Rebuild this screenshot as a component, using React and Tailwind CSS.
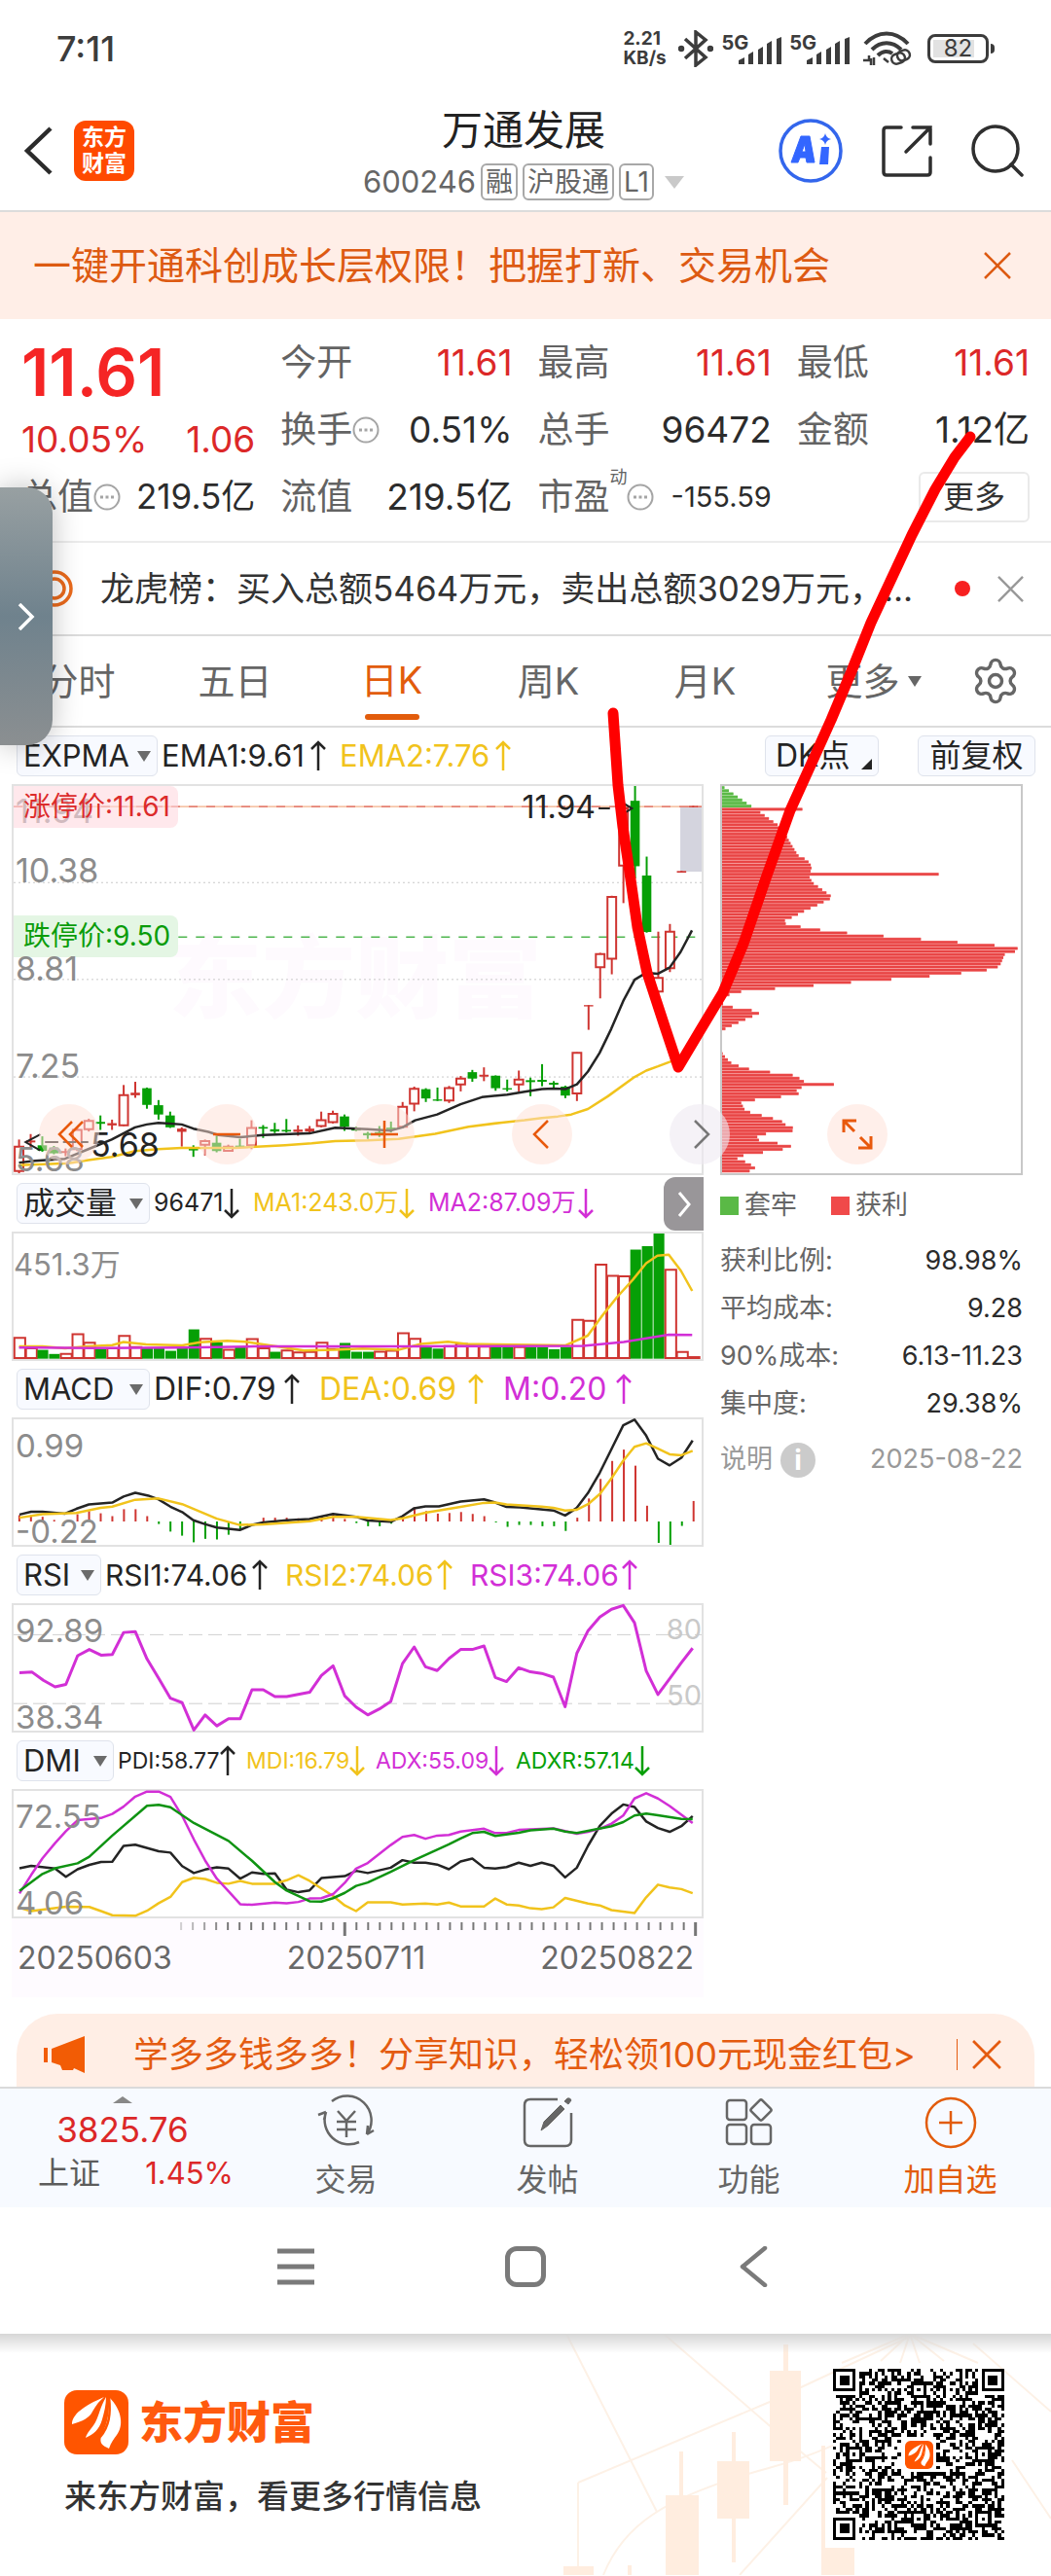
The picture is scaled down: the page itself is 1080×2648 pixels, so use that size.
import { Settings } from 'lucide-react';

const RED = '#cf3531';
const GREEN = '#069f06';
const BLACK = '#242424';
const YELLOW = '#f1c31c';
const PURPLE = '#d22fd6';

// [open/close top, open/close bottom, high, low, up?]
const candles = [
  [1320, 1400, 1300, 1405, 1], [1303, 1309, 1283, 1330, 1], [1318, 1335, 1290, 1338, 0], [1325, 1343, 1320, 1346, 0],
  [1336, 1342, 1328, 1352, 1], [1268, 1332, 1262, 1336, 1], [1240, 1270, 1235, 1275, 1], [1245, 1251, 1225, 1270, 0],
  [1249, 1256, 1238, 1270, 1], [1160, 1258, 1130, 1258, 1], [1154, 1162, 1120, 1170, 1], [1140, 1192, 1138, 1204, 0],
  [1193, 1222, 1177, 1238, 0], [1225, 1262, 1213, 1264, 0], [1266, 1276, 1262, 1322, 1], [1328, 1334, 1318, 1354, 0],
  [1303, 1318, 1300, 1350, 1], [1310, 1336, 1288, 1340, 0], [1320, 1337, 1316, 1338, 1], [1319, 1323, 1298, 1324, 0],
  [1262, 1320, 1240, 1330, 1], [1261, 1266, 1255, 1295, 0], [1268, 1275, 1248, 1280, 0], [1270, 1275, 1236, 1278, 0],
  [1269, 1276, 1256, 1288, 1], [1266, 1275, 1258, 1280, 1], [1238, 1260, 1213, 1262, 1], [1218, 1248, 1210, 1250, 1],
  [1228, 1260, 1222, 1273, 0], [1264, 1272, 1260, 1274, 0], [1280, 1287, 1276, 1298, 0], [1277, 1283, 1258, 1292, 0],
  [1263, 1268, 1244, 1278, 0], [1196, 1262, 1183, 1264, 1], [1140, 1190, 1135, 1212, 1], [1143, 1172, 1140, 1183, 0],
  [1175, 1179, 1138, 1180, 0], [1138, 1180, 1133, 1186, 1], [1108, 1130, 1102, 1150, 1], [1090, 1110, 1083, 1120, 0],
  [1098, 1104, 1075, 1118, 1], [1101, 1140, 1100, 1148, 0], [1140, 1144, 1113, 1150, 0], [1111, 1130, 1085, 1150, 1],
  [1115, 1121, 1107, 1165, 0], [1114, 1120, 1065, 1134, 0], [1123, 1129, 1118, 1142, 0], [1135, 1163, 1132, 1171, 0],
  [1028, 1158, 1028, 1180, 1], [881, 885, 881, 958, 1], [720, 765, 718, 860, 1], [542, 738, 540, 785, 1],
  [265, 448, 262, 563, 1], [244, 448, 198, 486, 0], [477, 653, 418, 655, 0], [794, 841, 652, 842, 1],
  [650, 768, 628, 778, 1], [463, 468, 463, 468, 1], [260, 264, 260, 264, 1],
];

const ema1 = '52,1372 100,1366 190,1360 260,1330 330,1300 400,1262 435,1253 470,1248 505,1250 540,1253 575,1266 620,1276 650,1286 715,1293 784,1286 923,1281 1000,1263 1098,1268 1167,1272 1202,1262 1240,1240 1306,1222 1376,1190 1440,1168 1516,1160 1568,1151 1620,1143 1655,1141 1690,1143 1725,1128 1758,1088 1793,1030 1828,955 1864,868 1898,802 1933,780 1968,783 2003,764 2036,715 2070,648';
const ema2 = '52,1380 200,1374 260,1364 330,1354 400,1336 470,1330 540,1326 700,1326 850,1318 930,1312 1000,1305 1098,1303 1190,1298 1300,1282 1400,1260 1500,1247 1568,1240 1620,1233 1668,1228 1708,1222 1758,1205 1818,1165 1898,1105 1933,1085 1968,1072 2003,1058 2030,1048';

// positive = rising day, negative = falling day
const volumes = [
  527, 560, -567, -580, 578, 515, 542, -565, 560, 521, 556, -560, -562, -570, -560, -502, 530, -543, 565, -558,
  531, 560, -573, 567, 573, 572, 542, 562, -545, -573, -573, 571, 568, 512, 530, -556, -563, 553, 546, 549,
  555, -547, -557, 556, -558, -558, -565, -558, 470, 473, 295, 330, 332, -249, -238, -198, 311, 572, 588,
];
const volMa1 = '38,556 90,556 140,562 190,556 245,552 270,542 320,550 400,553 440,543 500,538 540,541 580,550 620,558 670,569 740,567 800,563 880,567 930,548 990,541 1030,548 1100,550 1250,553 1300,522 1330,463 1365,400 1400,345 1430,292 1455,268 1480,265 1507,316 1532,380';
const volMa2 = '38,560 80,560 200,561 400,560 560,556 900,556 1290,554 1380,542 1440,528 1480,519 1532,520';

const macdBars = [
  1075, 1075, 1080, 1090, 1095, 1072, 1062, 1069, 1078, 1056, 1056, 1078, 1103, 1127, 1140, 1161, 1150, 1152, 1137, 1120,
  1095, 1083, 1083, 1083, 1085, 1085, 1078, 1072, 1087, 1100, 1110, 1110, 1102, 1078, 1050, 1062, 1070, 1068, 1065, 1071,
  1078, 1098, 1112, 1106, 1106, 1110, 1110, 1125, 1083, 1022, 960, 903, 867, 918, 1045, 1163, 1169, 1109, 1030,
];
const dif = '39,1073 65,1064 90,1064 140,1070 165,1055 193,1041 245,1035 270,1016 296,1004 325,1013 348,1025 374,1048 400,1065 425,1091 450,1103 477,1114 528,1122 555,1106 580,1098 632,1091 683,1087 735,1071 786,1080 812,1092 863,1096 889,1078 915,1053 940,1047 970,1047 1018,1032 1070,1025 1095,1035 1120,1049 1150,1050 1224,1060 1250,1076 1275,1053 1301,1004 1327,940 1353,865 1379,790 1404,772 1430,823 1456,896 1482,917 1508,893 1533,838';
const dea = '39,1083 90,1072 165,1068 219,1052 245,1048 296,1026 348,1022 400,1040 450,1070 477,1086 528,1106 580,1104 683,1094 735,1080 786,1080 863,1090 889,1085 940,1067 1018,1049 1070,1036 1095,1035 1120,1041 1198,1048 1224,1052 1250,1060 1275,1058 1301,1040 1327,1008 1353,958 1379,902 1404,858 1430,847 1456,864 1482,882 1508,885 1533,871';

const rsi = '39,389 67,387 92,413 118,434 142,426 168,335 194,315 220,333 245,331 270,261 296,258 322,345 348,407 374,470 400,484 426,571 451,523 477,558 503,535 529,535 555,443 580,443 606,465 632,465 683,451 709,398 735,367 761,463 786,498 812,523 838,504 863,480 889,360 915,307 940,370 966,382 992,344 1018,315 1044,315 1070,304 1095,404 1120,417 1147,373 1173,386 1198,391 1224,403 1250,497 1276,327 1301,255 1327,212 1353,187 1379,175 1404,230 1430,383 1456,458 1482,408 1508,357 1533,311';

const pdi = '39,992 65,984 118,993 142,1019 168,995 194,981 220,972 245,971 270,921 296,917 348,938 374,942 400,985 426,1007 451,996 477,989 503,993 529,1025 555,1005 580,1010 606,1008 632,1060 658,1068 683,1062 709,1023 761,1017 786,1000 812,1007 863,990 889,966 915,974 940,974 966,980 992,995 1018,970 1044,961 1070,990 1095,993 1120,988 1147,974 1173,984 1198,974 1224,984 1250,1021 1276,990 1301,920 1327,857 1353,818 1379,789 1404,797 1430,843 1456,864 1482,876 1508,858 1533,826';
const mdi = '39,1117 65,1128 142,1114 194,1115 220,1128 245,1141 296,1143 322,1127 348,1103 374,1083 400,1036 426,1022 451,1026 477,1038 503,1041 529,1032 555,1041 606,1041 632,1030 658,1014 683,1032 735,1080 761,1110 786,1128 812,1100 863,1100 889,1107 940,1104 966,1107 992,1101 1018,1113 1070,1113 1095,1088 1120,1107 1147,1110 1173,1119 1198,1122 1224,1116 1250,1086 1301,1104 1327,1110 1353,1125 1404,1134 1430,1084 1456,1044 1482,1053 1508,1058 1533,1071';
const adx = '39,1072 65,1013 90,960 118,912 142,874 168,839 220,832 245,819 270,796 296,764 322,748 348,748 374,765 400,825 426,900 451,967 477,1025 503,1065 529,1106 555,1108 606,1101 632,1103 658,1099 683,1088 709,1087 735,1074 761,1038 786,993 812,975 863,918 889,892 915,886 940,898 966,888 992,886 1018,875 1070,866 1095,880 1120,880 1147,870 1224,865 1276,882 1301,876 1327,866 1353,850 1379,824 1404,770 1430,753 1456,770 1482,794 1533,848';
const adxr = '39,1064 90,1010 118,992 168,976 194,955 245,888 322,793 348,790 374,798 426,848 503,905 555,968 606,1036 632,1063 683,1097 709,1098 735,1087 761,1070 786,1048 812,1037 863,1003 915,966 966,933 992,916 1018,897 1044,880 1070,876 1095,889 1147,879 1173,871 1224,866 1250,875 1276,880 1301,873 1353,858 1379,845 1404,824 1430,818 1456,823 1508,835 1533,836';

// outline of the cost distribution: [y, x]
const profile = [
  [204, 590], [258, 665], [267, 680], [275, 690], [323, 755], [330, 765], [370, 785], [415, 812], [430, 840], [450, 854],
  [480, 845], [500, 856], [546, 917], [568, 874], [585, 838], [605, 800], [624, 760], [634, 800], [644, 858], [653, 920],
  [663, 1030], [672, 1140], [682, 1250], [691, 1360], [701, 1468], [711, 1484], [720, 1437], [760, 1420], [770, 1397],
  [779, 1330], [789, 1237], [799, 1120], [808, 1003], [818, 886], [828, 768], [837, 650], [847, 612], [856, 583],
  [876, 583], [885, 596], [894, 658], [904, 700], [914, 680], [934, 636], [953, 596], [962, 583], [1030, 583],
  [1040, 590], [1060, 608], [1078, 650], [1088, 710], [1097, 790], [1107, 812], [1117, 830], [1136, 827], [1146, 805],
  [1156, 820], [1165, 778], [1175, 690], [1185, 640], [1205, 650], [1213, 660], [1232, 728], [1242, 762], [1252, 770],
  [1262, 795], [1272, 804], [1281, 720], [1291, 690], [1300, 683], [1310, 743], [1320, 793], [1330, 770], [1339, 715],
  [1349, 650], [1358, 625], [1368, 650], [1387, 685], [1396, 668], [1410, 655],
];
const spikes = { 267: 825, 469: 1236, 1127: 920 };

const costBars = Array.from({ length: 125 }, (_, i) => {
  const y = 204 + i * 9.63;
  const k = Math.max(1, profile.findIndex(([py]) => py >= y));
  const [y0, x0] = profile[k - 1];
  const [y1, x1] = profile[k];
  const spike = Object.keys(spikes).find((s) => Math.abs(s - y) < 4.8);
  return { y, x: spike ? spikes[spike] : x0 + ((x1 - x0) * (y - y0)) / (y1 - y0) };
});

const Line = ({ points, color, width = 2.5 }) => (
  <polyline points={points} fill="none" stroke={color} strokeWidth={width} strokeLinejoin="round" vectorEffect="non-scaling-stroke" />
);

const Plot = ({ viewBox, height = 'h-[133px]', border = 'border-[#e2e2e2]', children, overlay }) => (
  <div className={`relative border-2 ${border} ${height}`}>
    <svg viewBox={viewBox} preserveAspectRatio="none" className="block h-full w-full overflow-visible">
      {children}
    </svg>
    {overlay}
  </div>
);

const Arrow = ({ down }) => (
  <svg viewBox="0 0 16 32" className={`h-8 w-4 shrink-0 ${down ? 'rotate-180' : ''}`} fill="none" stroke="currentColor" strokeWidth="2.500">
    <path d="M8 31V2M1 9l7-7 7 7" />
  </svg>
);

const IndicatorRow = ({ name, pill, gap, size, items }) => (
  <div className="flex h-[58px] items-center pl-[5px]">
    <button className={`flex h-[42px] shrink-0 items-center justify-between rounded-md border border-[#dfe3ec] bg-[#f8faff] px-1.5 text-[#242424] ${pill}`}>
      <span>{name}</span>
      <span className="h-0 w-0 border-x-[7px] border-t-[11px] border-x-transparent border-t-[#6b6b6b]" />
    </button>
    <div className={`flex items-center pl-1 whitespace-nowrap ${gap} ${size}`}>
      {items.map(({ text, color, down, width }) => (
        <span key={text} className={`flex items-center justify-between ${color} ${width}`}>
          {text}
          <Arrow down={down} />
        </span>
      ))}
    </div>
  </div>
);

const Dots = () => (
  <svg viewBox="0 0 28 28" className="h-7 w-7 shrink-0" fill="none" stroke="#a5a5a5" strokeWidth="2">
    <circle cx="14" cy="14" r="12.500" />
    <path d="M7 14h3M12.500 14h3M18 14h3" strokeWidth="3" />
  </svg>
);

const Cross = ({ className }) => (
  <svg viewBox="0 0 28 28" className={className} fill="none" stroke="currentColor" strokeWidth="2.500">
    <path d="M1 1l26 26M27 1L1 27" />
  </svg>
);

const Cell = ({ label, value, icon, red, sup, valueSize = 'text-[37px]' }) => (
  <div className="flex h-[69px] items-center justify-between whitespace-nowrap">
    <dt className="flex items-center text-[37px] text-[#636363]">
      {label}
      {sup && <span className="self-start text-[18px] leading-4">{sup}</span>}
      {icon && <Dots />}
    </dt>
    <dd className={`${valueSize} ${red ? 'text-[#dc2828]' : 'text-[#2c2c2c]'}`}>{value}</dd>
  </div>
);

const Signal = () => (
  <div className="flex">
    <span className="text-[20px] leading-5 font-bold">5G</span>
    <svg viewBox="0 0 44 28" className="mt-1 -ml-2.5 h-7 w-11" fill="#3c3c3c">
      <path d="M0 28v-4l6-3v7zM10 28V18l5-3v13zM20 28V13l5-3v18zM29 28V7l5-3v24zM39 28V2l5-2v28z" />
    </svg>
  </div>
);

const StatusBar = () => (
  <header className="flex h-[100px] items-center justify-between pr-[58px] pl-[58px] text-[#3c3c3c]">
    <span className="text-[36px] font-medium">7:11</span>
    <div className="flex items-center">
      <div className="flex w-[53px] flex-col text-[19px] leading-5 font-bold">
        <span>2.21</span>
        <span>KB/s</span>
      </div>
      <svg viewBox="0 0 36 38" className="mr-2 ml-1 h-[38px] w-9" fill="none" stroke="#3c3c3c" strokeWidth="3.500">
        <path d="M7 9l21 19-10 8V2l10 8L7 29" />
        <circle cx="3" cy="19" r="1.500" />
        <circle cx="33" cy="19" r="1.500" />
      </svg>
      <Signal />
      <div className="w-2" />
      <Signal />
      <svg viewBox="0 0 50 36" className="mr-4 ml-3.5 h-9 w-[50px]" fill="none" stroke="#3c3c3c" strokeWidth="4">
        <path d="M2 13c13-14 31-14 44 0" />
        <path d="M9 19c9-9 21-9 30 0" />
        <path d="M15 25c5-5 11-5 15-2" />
        <path d="M0 30h6v-5M11 27v8M8 28v7M21 28l5 4" strokeWidth="2.500" />
        <rect x="29" y="23" width="14" height="10" rx="5" strokeWidth="2.500" transform="rotate(-20 36 28)" />
        <rect x="35" y="20" width="13" height="10" rx="5" strokeWidth="2.500" transform="rotate(-20 41 25)" />
      </svg>
      <div className="flex h-[30px] w-[63px] items-center justify-center rounded-lg border-3 border-[#3c3c3c] p-[3px] text-[24px] leading-none">
        <span className="flex h-full w-full items-center justify-center bg-linear-to-r from-[#e2e2e2] from-82% to-transparent to-82%">82</span>
      </div>
      <span className="ml-0.5 h-2.5 w-1 rounded-r bg-[#3c3c3c]" />
    </div>
  </header>
);

const TitleBar = () => (
  <div className="grid h-[118px] grid-cols-[1fr_auto_1fr] items-center border-b-2 border-[#dcdcdc] pr-7 pl-6">
    <div className="mb-1.5 flex items-center gap-[22px]">
      <button aria-label="返回">
        <svg viewBox="0 0 30 50" className="h-[50px] w-[30px]" fill="none" stroke="#2b2b2b" strokeWidth="4.500">
          <path d="M28 2L4 25l24 23" />
        </svg>
      </button>
      <div className="flex h-[62px] w-[62px] items-center justify-center rounded-xl bg-[#ff4a00] text-center text-[23px] leading-[27px] font-bold text-white">
        东方
        <br />
        财富
      </div>
    </div>
    <div className="flex flex-col items-center">
      <h1 className="text-[42px] leading-[58px] text-[#222]">万通发展</h1>
      <div className="flex h-[48px] items-center gap-[5px] text-[#666]">
        <span className="text-[31px]">600246</span>
        {['融', '沪股通', 'L1'].map((tag) => (
          <span key={tag} className="rounded-md border-2 border-[#a8a8a8] px-[3px] text-[28px] leading-[34px]">
            {tag}
          </span>
        ))}
        <span className="ml-1.5 h-0 w-0 border-x-[10px] border-t-[13px] border-x-transparent border-t-[#c9c9c9]" />
      </div>
    </div>
    <div className="mb-1.5 flex items-center justify-end gap-[39px]">
      <button aria-label="Ai">
        <svg viewBox="0 0 66 66" className="h-[66px] w-[66px]" fill="none" stroke="#3366ec">
          <circle cx="33" cy="33" r="31" strokeWidth="3.500" />
          <path d="M13 45L23 18h9l5 27h-8l-1-5h-6l-2 5zM24 34h4l-1-8z" fill="#3366ff" fillRule="evenodd" stroke="#3366ff" strokeLinejoin="round" />
          <path d="M44 29h8l-1 18h-9z" fill="#3366ff" stroke="none" />
          <path d="M48 15q1 5 6 6-5 1-6 6-1-5-6-6 5-1 6-6z" fill="#3366ff" stroke="none" />
        </svg>
      </button>
      <button aria-label="分享">
        <svg viewBox="0 0 54 54" className="h-[54px] w-[54px]" fill="none" stroke="#2f2f2f" strokeWidth="3.500" strokeLinecap="round">
          <path d="M21 3H6q-3 0-3 3v43q0 3 3 3h42q3 0 3-3V34M33 3h18v17M51 3L26 28" />
        </svg>
      </button>
      <button aria-label="搜索">
        <svg viewBox="0 0 54 54" className="h-[54px] w-[54px]" fill="none" stroke="#2f2f2f" strokeWidth="3.500" strokeLinecap="round">
          <circle cx="25" cy="25" r="23" />
          <path d="M41 41l11 11" />
        </svg>
      </button>
    </div>
  </div>
);

const Quotes = () => (
  <section className="border-b-2 border-[#ececec] pt-[10px] pr-[22px] pb-[11px] pl-[22px]">
    <dl className="grid grid-cols-[240fr_238fr_240fr_239fr] gap-x-[26px]">
      <div className="row-span-2 flex flex-col text-[#dc2828]">
        <dd className="text-[67px] leading-[90px] font-semibold text-[#f52525]">11.61</dd>
        <dd className="flex justify-between text-[37px] leading-[48px]">
          <span>10.05%</span>
          <span>1.06</span>
        </dd>
      </div>
      <Cell label="今开" value="11.61" red />
      <Cell label="最高" value="11.61" red />
      <Cell label="最低" value="11.61" red />
      <Cell label="换手" value="0.51%" icon />
      <Cell label="总手" value="96472" />
      <Cell label="金额" value="1.12亿" />
      <Cell label="总值" value="219.5亿" icon valueSize="text-[35px]" />
      <Cell label="流值" value="219.5亿" />
      <Cell label="市盈" sup="动" value="-155.59" icon valueSize="text-[29px]" />
      <div className="flex h-[69px] items-center justify-end">
        <button className="h-[52px] w-[114px] rounded-md border-2 border-[#eaeaea] text-[32px] leading-none text-[#333]">更多</button>
      </div>
    </dl>
  </section>
);

const News = () => (
  <div className="flex h-[96px] items-center border-b-2 border-[#dcdcdc] pr-7 pl-[37px]">
    <svg viewBox="0 0 38 38" className="h-[38px] w-[38px] shrink-0" fill="none" stroke="#ea6a1c" strokeWidth="3.500">
      <circle cx="19" cy="19" r="17" />
      <circle cx="19" cy="19" r="10" />
    </svg>
    <p className="ml-[28px] flex-1 overflow-hidden text-[35px] whitespace-nowrap text-[#333]">
      龙虎榜：买入总额5464万元，卖出总额3029万元，...
    </p>
    <span className="h-4 w-4 shrink-0 rounded-full bg-[#f72020]" />
    <button aria-label="关闭" className="ml-7 text-[#999]"><Cross className="h-[27px] w-[27px]" /></button>
  </div>
);

const Tabs = () => (
  <nav className="grid h-[94px] grid-cols-[161fr_161fr_161fr_161fr_161fr_185fr_90fr] items-center border-b-2 border-[#dcdcdc] text-[38px] text-[#666]">
    {['分时', '五日', '日K', '周K', '月K'].map((tab) => (
      <button
        key={tab}
        className={tab === '日K' ? 'flex h-full flex-col items-center pt-[17px] text-[#e25c0c]' : ''}
      >
        {tab}
        {tab === '日K' && <span className="mt-1.5 h-1.5 w-14 shrink-0 rounded bg-[#e25c0c]" />}
      </button>
    ))}
    <button className="flex items-center justify-center gap-2">
      更多
      <span className="h-0 w-0 border-x-[7px] border-t-[11px] border-x-transparent border-t-[#666]" />
    </button>
    <button aria-label="设置" className="pl-[7px]"><Settings className="h-[52px] w-[52px]" strokeWidth={1.6} /></button>
  </nav>
);

const KLine = () => (
  <Plot
    viewBox="36 198 2063 1207"
    height="h-[402px]"
    overlay={
      <div className="text-[34px] leading-10 text-[#8c8c8c]">
        <span className="absolute top-[6px] left-0.5">11.94</span>
        <span className="absolute top-0 left-0 w-[169px] rounded-r-lg bg-[#ffd9e0]/60 pl-2.5 text-[28px] leading-[43px] text-[#dc2b2b]">涨停价:11.61</span>
        <span className="absolute top-[67px] left-0.5">10.38</span>
        <span className="absolute top-[133px] left-0 w-[169px] rounded-r-lg bg-[#e4f6e4] pl-2.5 text-[28px] leading-[43px] text-[#0a9c0a]">跌停价:9.50</span>
        <span className="absolute top-[168px] left-0.5">8.81</span>
        <span className="absolute top-[268px] left-0.5">7.25</span>
        <span className="absolute top-[364px] left-0.5">5.68</span>
        <span className="absolute top-[349px] left-[79px] text-[#242424]">5.68</span>
        <span className="absolute top-[2px] right-[109px] text-[32px] text-[#242424]">11.94</span>
      </div>
    }
  >
    <text x="500" y="900" fontSize="280" fontWeight="900" fill="#fefafe">东方财富</text>
    {[499, 801, 1105].map((y) => (
      <path key={y} d={`M36 ${y}H2099`} stroke="#c9c9c9" strokeDasharray="2 3" strokeWidth="1" vectorEffect="non-scaling-stroke" />
    ))}
    <rect x="2035" y="265" width="64" height="200" fill="#d4d4de" />
    <path d="M36 262H2099" stroke="#ef9a68" strokeWidth="1" vectorEffect="non-scaling-stroke" />
    <path d="M36 262H2099" stroke="#d9534f" strokeWidth="1" strokeDasharray="9 9" vectorEffect="non-scaling-stroke" />
    <path d="M530 669H2099" stroke="#4fb64f" strokeWidth="1.500" strokeDasharray="9 9" vectorEffect="non-scaling-stroke" />
    {candles.map(([top, bottom, high, low, up], i) => {
      const x = 52.3 + 34.85 * i;
      const color = up ? RED : GREEN;
      const solid = !up || bottom - top < 12;
      return (
        <g key={i} stroke={color} fill={solid ? color : 'white'}>
          <path d={`M${x} ${high}V${low}`} strokeWidth="2" vectorEffect="non-scaling-stroke" />
          {solid ? (
            <rect x={x - 14} y={top} width="28" height={bottom - top} stroke="none" />
          ) : (
            <rect x={x - 13} y={top + 2} width="26" height={bottom - top - 4} strokeWidth="2" vectorEffect="non-scaling-stroke" />
          )}
        </g>
      );
    })}
    <Line points={ema2} color={YELLOW} />
    <Line points={ema1} color={BLACK} />
    <path d="M116 1284L72 1308l44 26M130 1308h40M184 1308h40M238 1308h22" fill="none" stroke={BLACK} strokeWidth="2" vectorEffect="non-scaling-stroke" />
    <path d="M1790 268h34M1868 254l22 14-22 14M1842 268h30" fill="none" stroke={BLACK} strokeWidth="2" vectorEffect="non-scaling-stroke" />
  </Plot>
);

const CostChart = () => (
  <Plot viewBox="583 199 901 1206" height="h-[402px]" border="border-[#c8c8c8]">
    {costBars.map(({ y, x }) => (
      <g key={y}>
        <rect x="583" y={y - 4.8} width={x - 583} height="9.700" fill={y < 262 ? '#8ad078' : '#f58080'} />
        <rect x="583" y={y - 3.4} width={x - 583} height="6.800" fill={y < 262 ? '#5ab946' : '#e84444'} />
      </g>
    ))}
  </Plot>
);

const toolIcons = [
  { name: '快退', path: 'M18 2L5 15l13 13M29 2L16 15l13 13' },
  { name: '缩小', path: 'M1 15h28' },
  { name: '放大', path: 'M1 15h28M15 1v28' },
  { name: '左移', path: 'M21 1L7 15l14 14' },
  { name: '右移', path: 'M10 1l14 14-14 14', gray: true },
];

const ChartTools = () => (
  <div className="absolute right-[139px] bottom-[11px] left-7 flex justify-between">
    {toolIcons.map(({ name, path, gray }) => (
      <button
        key={name}
        aria-label={name}
        className={`flex h-[62px] w-[62px] items-center justify-center rounded-full ${gray ? 'bg-[#efeaf2]/60 text-[#777]' : 'bg-[#ffdfd5]/50 text-[#e8590c]'}`}
      >
        <svg viewBox="0 0 30 30" className="h-[30px] w-[30px]" fill="none" stroke="currentColor" strokeWidth="2.500">
          <path d={path} />
        </svg>
      </button>
    ))}
    <button aria-label="全屏" className="flex h-[62px] w-[62px] items-center justify-center rounded-full bg-[#ffdfd5]/50 text-[#e8590c]">
      <svg viewBox="0 0 32 32" className="h-8 w-8" fill="none" stroke="currentColor" strokeWidth="3">
        <path d="M2 14V2h13M2 2l11 11M30 18v12H17M30 30L19 19" />
      </svg>
    </button>
  </div>
);

const stats = [
  ['获利比例:', '98.98%'],
  ['平均成本:', '9.28'],
  ['90%成本:', '6.13-11.23'],
  ['集中度:', '29.38%'],
];

const CostInfo = () => (
  <aside className="text-[27px] text-[#666]">
    <div className="flex h-[62px] items-center">
      <span className="h-[19px] w-[19px] bg-[#5ab946]" />
      <span className="ml-1.5">套牢</span>
      <span className="ml-[35px] h-[19px] w-[19px] bg-[#f04a4a]" />
      <span className="ml-1.5">获利</span>
    </div>
    <dl className="pt-[2px]">
      {stats.map(([label, value]) => (
        <div key={label} className="flex h-[49px] items-center justify-between">
          <dt>{label}</dt>
          <dd className="text-[#2b2b2b]">{value}</dd>
        </div>
      ))}
    </dl>
    <div className="mt-2 flex h-[49px] items-center text-[#999]">
      说明
      <span className="ml-2 flex h-9 w-9 items-center justify-center rounded-full bg-[#cbcbcb] text-[28px] font-bold text-white">i</span>
      <span className="ml-auto">2025-08-22</span>
    </div>
  </aside>
);

const Indicators = () => (
  <div>
    <div className="relative">
      <IndicatorRow
        name="成交量"
        pill="w-[137px] text-[32px] leading-none"
        gap="gap-[14px]"
        size="text-[25px]"
        items={[
          { text: '96471', color: 'text-[#242424]', down: true, width: 'w-[88px]' },
          { text: 'MA1:243.0万', color: 'text-[#f1c31c]', down: true, width: 'w-[166px]' },
          { text: 'MA2:87.09万', color: 'text-[#d22fd6]', down: true, width: 'w-[170px]' },
        ]}
      />
      <button aria-label="收起" className="absolute top-0.5 right-0 flex h-[55px] w-[41px] items-center justify-center rounded-l-xl bg-[#999699]">
        <svg viewBox="0 0 14 26" className="h-[26px] w-3.5" fill="none" stroke="white" strokeWidth="3">
          <path d="M2 1l10 12L2 25" />
        </svg>
      </button>
    </div>
    <Plot viewBox="26 198 1527 398" overlay={<span className="absolute top-[9px] left-0 text-[31px] text-[#8c8c8c]">451.3万</span>}>
      {volumes.map((v, i) => {
        const x = 38.7 + 25.8 * i;
        const top = Math.abs(v);
        return v < 0 ? (
          <rect key={i} x={x - 11.5} y={top} width="24" height={595 - top} fill={GREEN} />
        ) : (
          <rect key={i} x={x - 11} y={top + 2} width="24" height={Math.max(593 - top - 2, 2)} fill="white" stroke={RED} strokeWidth="2" vectorEffect="non-scaling-stroke" />
        );
      })}
      <Line points={volMa1} color={YELLOW} />
      <Line points={volMa2} color={PURPLE} />
    </Plot>
    <IndicatorRow
      name="MACD"
      pill="w-[137px] text-[31px]"
      gap="gap-5"
      size="text-[32px]"
      items={[
        { text: 'DIF:0.79', color: 'text-[#242424]', width: 'w-[150px]' },
        { text: 'DEA:0.69', color: 'text-[#f1c31c]', width: 'w-[169px]' },
        { text: 'M:0.20', color: 'text-[#d22fd6]', width: 'w-[132px]' },
      ]}
    />
    <Plot
      viewBox="26 771 1527 398"
      overlay={
        <div className="text-[33px] leading-9 text-[#8c8c8c]">
          <span className="absolute top-[9px] left-0.5">0.99</span>
          <span className="absolute top-[97px] left-0.5">-0.22</span>
        </div>
      }
    >
      {macdBars.map((y, i) => (
        <path key={i} d={`M${38.7 + 25.8 * i} 1095V${y}`} stroke={y > 1095 ? GREEN : RED} strokeWidth="2" vectorEffect="non-scaling-stroke" />
      ))}
      <Line points={dif} color={BLACK} />
      <Line points={dea} color={YELLOW} />
    </Plot>
    <IndicatorRow
      name="RSI"
      pill="w-[87px] text-[31px]"
      gap="gap-[18px]"
      size="text-[30px]"
      items={[
        { text: 'RSI1:74.06', color: 'text-[#242424]', width: 'w-[167px]' },
        { text: 'RSI2:74.06', color: 'text-[#f1c31c]', width: 'w-[172px]' },
        { text: 'RSI3:74.06', color: 'text-[#d22fd6]', width: 'w-[172px]' },
      ]}
    />
    <Plot
      viewBox="26 174 1527 399"
      overlay={
        <div className="text-[33px] leading-9 text-[#8c8c8c]">
          <span className="absolute top-[8px] left-0.5">92.89</span>
          <span className="absolute top-[97px] left-0.5">38.34</span>
          <span className="absolute top-[7px] right-0 text-[29px] text-[#c9c9c9]">80</span>
          <span className="absolute top-[75px] right-0 text-[29px] text-[#c9c9c9]">50</span>
        </div>
      }
    >
      <path d="M26 268H1553" stroke="#cfcfcf" strokeDasharray="14 6" vectorEffect="non-scaling-stroke" />
      <path d="M26 487H1553" stroke="#cfcfcf" strokeDasharray="14 6" vectorEffect="non-scaling-stroke" />
      <Line points={rsi} color={PURPLE} width={3} />
    </Plot>
    <IndicatorRow
      name="DMI"
      pill="w-[100px] text-[31px]"
      gap="gap-[14px]"
      size="text-[23px]"
      items={[
        { text: 'PDI:58.77', color: 'text-[#242424]', width: 'w-[118px]' },
        { text: 'MDI:16.79', color: 'text-[#f1c31c]', down: true, width: 'w-[119px]' },
        { text: 'ADX:55.09', color: 'text-[#d22fd6]', down: true, width: 'w-[130px]' },
        { text: 'ADXR:57.14', color: 'text-[#069f06]', down: true, width: 'w-[133px]' },
      ]}
    />
    <Plot
      viewBox="26 746 1527 399"
      overlay={
        <div className="text-[33px] leading-9 text-[#8c8c8c]">
          <span className="absolute top-[8px] left-0.5">72.55</span>
          <span className="absolute top-[97px] left-0.5">4.06</span>
        </div>
      }
    >
      <Line points={pdi} color={BLACK} />
      <Line points={mdi} color={YELLOW} />
      <Line points={adx} color={PURPLE} />
      <Line points={adxr} color="#0f9312" />
    </Plot>
    <div className="h-[81px] bg-[#fefbff] pt-1">
      <svg viewBox="26 0 1527 14" preserveAspectRatio="none" className="block h-3.5 w-full">
        {Array.from({ length: 45 }, (_, k) => k + 14).map((i) => (
          <path
            key={i}
            d={`M${38.7 + 25.8 * i} 0V${i === 28 || i === 58 ? 14 : 8}`}
            stroke="#777"
            strokeWidth={i === 28 || i === 58 ? 3 : 2}
            opacity={Math.min(1, (i - 12) / 6)}
            vectorEffect="non-scaling-stroke"
          />
        ))}
      </svg>
      <div className="flex justify-between pr-2.5 pl-1.5 text-[32px] leading-[46px] text-[#686868]">
        <span>20250603</span>
        <span>20250711</span>
        <span>20250822</span>
      </div>
    </div>
  </div>
);

const Promo = () => (
  <div className="px-[17px] pt-[17px]">
    <div className="flex h-[75px] items-center rounded-t-[42px] bg-[#ffeee5] pr-[34px] pl-7 text-[#e45b10]">
      <svg viewBox="0 0 42 38" className="mt-2 h-[38px] w-[42px] shrink-0" fill="#f25c05">
        <path d="M0 12h4v15H0zM8 13L42 0v38l-11-5-1 2H19l-2-5-9-3z" />
      </svg>
      <p className="mt-2 ml-[50px] flex-1 text-[36px] whitespace-nowrap">学多多钱多多！分享知识，轻松领100元现金红包&gt;</p>
      <span className="mt-2 h-8 w-px bg-[#e45b10]" />
      <button aria-label="关闭" className="mt-2 ml-[15px]"><Cross className="h-[30px] w-[30px]" /></button>
    </div>
  </div>
);

const actions = [
  {
    label: '交易',
    icon: (
      <>
        <path d="M15 7a25 25 0 0 1 36 34M51 41l1-9M51 41l7-4M43 49A25 25 0 0 1 9 18M9 18l-8 3M9 18l-2 8" />
        <path d="M21 17l9 10 9-10M20 28h20M20 36h20M30 27v17" />
      </>
    ),
  },
  {
    label: '发帖',
    icon: (
      <>
        <path d="M40 5H12q-6 0-6 6v36q0 6 6 6h36q6 0 6-6V19" />
        <path d="M23 37l3-9L43 11l4 4-17 17zM47 7l3-3q3-1 4 2l-3 4z" fill="currentColor" strokeWidth="1" />
      </>
    ),
  },
  {
    label: '功能',
    icon: (
      <>
        <rect x="7" y="6" width="20" height="20" rx="3" />
        <rect x="7" y="31" width="20" height="20" rx="3" />
        <rect x="32" y="31" width="20" height="20" rx="3" />
        <rect x="34" y="8" width="16" height="16" rx="2" transform="rotate(45 42 16)" />
      </>
    ),
  },
  {
    label: '加自选',
    active: true,
    icon: (
      <>
        <circle cx="30" cy="29" r="25" />
        <path d="M30 17v24M18 29h24" />
      </>
    ),
  },
];

const BottomBar = () => (
  <nav className="grid grid-cols-[252fr_207fr_207fr_207fr_207fr] border-t-2 border-[#dadada] bg-[#f7faff] pb-1.5">
    <button className="flex flex-col items-center pt-2 text-[#dc2828]">
      <span className="h-0 w-0 border-x-[10px] border-b-[7px] border-x-transparent border-b-[#888]" />
      <span className="mt-1 text-[35px] leading-[46px]">3825.76</span>
      <span className="flex w-full justify-between pr-3 pl-[39px] text-[32px] leading-[44px]">
        <span className="text-[#5c5c5c]">上证</span>
        <span className="text-[31px]">1.45%</span>
      </span>
    </button>
    {actions.map(({ label, icon, active }) => (
      <button key={label} className={`flex flex-col items-center pt-1.5 ${active ? 'text-[#e25c0c]' : 'text-[#666]'}`}>
        <svg viewBox="0 0 60 58" className="h-[58px] w-[60px]" fill="none" stroke="currentColor" strokeWidth="2.500">
          {icon}
        </svg>
        <span className="mt-2 text-[32px] leading-[44px]">{label}</span>
      </button>
    ))}
  </nav>
);

const SystemNav = () => (
  <div className="flex h-[130px] items-center justify-center gap-[194px] pb-2 text-[#7a7a7a]">
    <button aria-label="菜单">
      <svg viewBox="0 0 42 42" className="h-[42px] w-[42px]" stroke="currentColor" strokeWidth="5">
        <path d="M2 5h38M2 21h38M2 37h38" />
      </svg>
    </button>
    <button aria-label="主页" className="h-[42px] w-[42px] rounded-xl border-5 border-[#7a7a7a]" />
    <button aria-label="后退">
      <svg viewBox="0 0 42 42" className="h-[42px] w-[42px]" fill="none" stroke="currentColor" strokeWidth="4.500" strokeLinecap="round" strokeLinejoin="round">
        <path d="M31 2L8 21l23 19" />
      </svg>
    </button>
  </div>
);

const BrandMark = ({ className }) => (
  <svg viewBox="0 0 66 66" className={className}>
    <rect width="66" height="66" rx="13" fill="#ff5500" />
    <path d="M8 35c0-10 12-19 33-28-7 6-9 10-12 15-3 6-10 10-21 13z" fill="white" />
    <path d="M22 49c1-5 6-9 10-16 4-8 5-16 11-26 0 8-2 16-4 23-3 11-9 15-17 19z" fill="white" />
    <path d="M46 60c-7-3-10-6-8-12 2-7 9-15 8-41 14 14 15 30 8 39-3 4-6 8-8 14z" fill="white" />
    <path d="M46 7c2 18 0 30-9 41" fill="none" stroke="#ff5500" strokeWidth="2.500" />
  </svg>
);

const SIZE = 53;
const ring = (x, y, cx, cy) => Math.max(Math.abs(x - cx), Math.abs(y - cy));

const isDark = (x, y) => {
  for (const [cx, cy] of [[3, 3], [SIZE - 4, 3], [3, SIZE - 4]]) {
    const r = ring(x, y, cx, cy);
    if (r <= 4) return r !== 2 && r !== 4;
  }
  for (const [cx, cy] of [[26, 6], [6, 26], [46, 26], [26, 46], [46, 46]]) {
    const r = ring(x, y, cx, cy);
    if (r <= 2) return r !== 1;
  }
  if (y === 6 || x === 6) return (x + y) % 2 === 0;
  if (ring(x, y, 26, 26) <= 5) return false;
  const n = Math.sin(x * 127.1 + y * 311.7) * 43758.5453;
  return n - Math.floor(n) > 0.5;
};

const qrPath = Array.from({ length: SIZE * SIZE }, (_, i) => [i % SIZE, Math.floor(i / SIZE)])
  .filter(([x, y]) => isDark(x, y))
  .map(([x, y]) => `M${x} ${y}h1v1h-1z`)
  .join('');

const BrandFooter = () => (
  <footer className="relative flex h-[248px] items-center justify-between overflow-hidden bg-white pr-12 pl-[66px]">
    <svg viewBox="540 2400 540 248" preserveAspectRatio="xMaxYMin slice" className="absolute inset-y-0 right-0 h-full w-1/2" fill="#ffeddf" stroke="#fdf1e6" strokeWidth="2">
      <path d="M582 2400l93 183M682 2400l107 93 60 50M594 2553l197-83 150-70M620 2648c20-50 60-80 170-110s150-80 150-80M760 2648l90-100M1000 2410l80 70M594 2553v95M1040 2530l40 60M935 2400l-70 30M935 2400l-30 28M935 2400l-10 30M935 2400l10 30M935 2400l35 28M935 2400l70 30" fill="none" />
      <g stroke="none">
        <path d="M791 2438h32v93h-32zM805 2411h5v165h-5z" />
        <path d="M737 2531h33v59h-33zM752 2501h4v134h-4z" />
        <path d="M684 2566h34v82h-34zM698 2521h4v50h-4z" />
        <path d="M844 2620h34v28h-34zM844 2515h4v110h-4zM579 2639h31v9h-31zM645 2638h4v10h-4z" />
      </g>
    </svg>
    <div className="absolute inset-x-0 top-0 h-5 bg-linear-to-b from-[#d6d6d6] to-transparent" />
    <div className="relative">
      <div className="flex items-center gap-[11px]">
        <BrandMark className="h-[66px] w-[66px]" />
        <span className="text-[45px] leading-none font-black text-[#ff5a0e]">东方财富</span>
      </div>
      <p className="mt-5 text-[33px] leading-[46px] font-medium text-[#333]">来东方财富，看更多行情信息</p>
    </div>
    <div className="relative flex items-center justify-center rounded-lg bg-white">
      <svg viewBox="0 0 53 53" className="h-[176px] w-[176px]" shapeRendering="crispEdges">
        <path d={qrPath} />
      </svg>
      <BrandMark className="absolute h-[29px] w-[29px]" />
    </div>
  </footer>
);

const App = () => (
  <main className="relative w-full overflow-hidden bg-white font-['Inter','Noto_Sans_CJK_SC',sans-serif]">
    <StatusBar />
    <TitleBar />
    <div className="flex h-[110px] items-center justify-between bg-[#ffeee7] pr-[41px] pl-[34px] text-[39px] text-[#dd5a12]">
      <span>一键开通科创成长层权限！把握打新、交易机会</span>
      <button aria-label="关闭"><Cross className="h-7 w-7" /></button>
    </div>
    <Quotes />
    <News />
    <Tabs />
    <section className="pr-[29px] pl-3">
      <div className="flex items-center justify-between">
        <IndicatorRow
          name="EXPMA"
          pill="w-[145px] text-[31px]"
          gap="gap-[14px]"
          size="text-[31px]"
          items={[
            { text: 'EMA1:9.61', color: 'text-[#242424]', width: 'w-[169px]' },
            { text: 'EMA2:7.76', color: 'text-[#f1c31c]', width: 'w-[176px]' },
          ]}
        />
        <div className="-mr-[13px] flex gap-10 text-[32px] text-[#242424]">
          <button className="flex h-[42px] w-[117px] items-center justify-between rounded-md border border-[#dfe3ec] bg-[#f8faff] pr-1.5 pl-2.5 leading-none">
            DK点
            <span className="mt-4 h-0 w-0 border-b-[11px] border-l-[11px] border-b-[#242424] border-l-transparent" />
          </button>
          <button className="h-[42px] w-[121px] rounded-md border border-[#dfe3ec] bg-[#f8faff] leading-none">前复权</button>
        </div>
      </div>
      <div className="relative grid grid-cols-[711fr_311fr] gap-[17px]">
        <KLine />
        <CostChart />
        <ChartTools />
      </div>
      <div className="grid grid-cols-[711fr_311fr] gap-[17px]">
        <Indicators />
        <CostInfo />
      </div>
    </section>
    <Promo />
    <BottomBar />
    <SystemNav />
    <BrandFooter />
    <button
      aria-label="展开"
      className="absolute top-[501px] left-0 flex h-[265px] w-[54px] items-center justify-center rounded-r-[26px] bg-linear-to-b from-[#98a0a2] via-[#6f828d] to-[#8b8f91] shadow-[0_0_30px_rgba(0,0,0,0.25)]"
    >
      <svg viewBox="0 0 18 28" className="h-7 w-[18px]" fill="none" stroke="white" strokeWidth="3.500">
        <path d="M2 1l13 13L2 27" />
      </svg>
    </button>
    <svg viewBox="0 0 1080 1120" className="pointer-events-none absolute top-0 left-0 w-full" fill="none" stroke="#ff0000" strokeWidth="11" strokeLinecap="round" strokeLinejoin="round">
      <path d="M630 733L635 807L640 850L646 890L655 953L665 1000L683 1055L697 1097L719 1060L743 1020L764 970L788 900L812 833L836 780L854 740L875 690L895 640L937 550L961 503L981 470L997 449" />
    </svg>
  </main>
);

export default App;
